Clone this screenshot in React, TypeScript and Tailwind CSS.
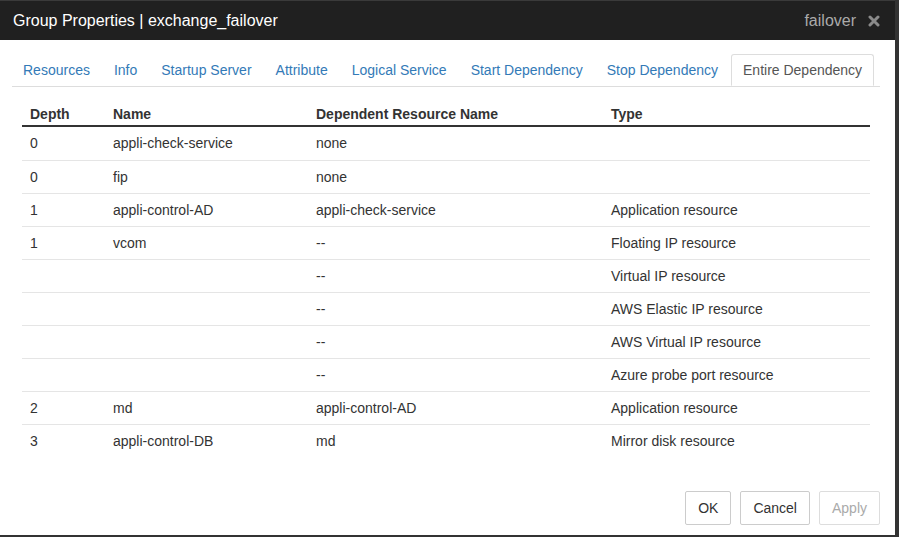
const tabs = [
  'Resources',
  'Info',
  'Startup Server',
  'Attribute',
  'Logical Service',
  'Start Dependency',
  'Stop Dependency',
  'Entire Dependency',
];

const rows = [
  ['0', 'appli-check-service', 'none', ''],
  ['0', 'fip', 'none', ''],
  ['1', 'appli-control-AD', 'appli-check-service', 'Application resource'],
  ['1', 'vcom', '--', 'Floating IP resource'],
  ['', '', '--', 'Virtual IP resource'],
  ['', '', '--', 'AWS Elastic IP resource'],
  ['', '', '--', 'AWS Virtual IP resource'],
  ['', '', '--', 'Azure probe port resource'],
  ['2', 'md', 'appli-control-AD', 'Application resource'],
  ['3', 'appli-control-DB', 'md', 'Mirror disk resource'],
];

const colW = ['w-[83px]', 'w-[203px]', 'w-[295px]', 'flex-1'];

const App = () => {
  return (
    <div
      className="w-[899px] h-[537px] bg-[#333] overflow-hidden"
      style={{ fontFamily: '"Liberation Sans", Arial, sans-serif' }}
    >
      <div className="w-[895px] h-[535px] bg-white flex flex-col">
        {/* header */}
        <div className="h-[40px] bg-[#202020] border-t border-[#3a3a3a] flex items-center justify-between pl-[13px] pr-[15px]">
          <span className="text-white text-[16px]">Group Properties | exchange_failover</span>
          <div className="flex items-center gap-[12px]">
            <span className="text-[#aaa] text-[16px]">failover</span>
            <svg width="12" height="12" viewBox="0 0 12 12">
              <path d="M2 2 L10 10 M10 2 L2 10" stroke="#8a8a8a" strokeWidth="3" strokeLinecap="round" />
            </svg>
          </div>
        </div>

        {/* tabs */}
        <div className="mt-[14px] mx-[12px] mr-[15px] flex border-b border-[#ddd] text-[14px]">
          {tabs.map((t, i) => {
            const active = i === tabs.length - 1;
            return (
              <div
                key={t}
                className={
                  active
                    ? 'h-[32px] px-[11px] flex items-center border border-[#ddd] border-b-white -mb-px rounded-t-[3px] text-[#555] bg-white'
                    : 'h-[32px] px-[11px] mr-[2px] flex items-center text-[#337ab7]'
                }
              >
                {t}
              </div>
            );
          })}
        </div>

        {/* table */}
        <div className="mt-[13px] ml-[22px] w-[848px] text-[14px] text-[#333]">
          <div className="flex h-[27px] items-center border-b-2 border-[#333] font-bold pt-[3px]">
            {['Depth', 'Name', 'Dependent Resource Name', 'Type'].map((h, i) => (
              <div key={h} className={`${colW[i]} pl-[8px]`}>
                {h}
              </div>
            ))}
          </div>
          {rows.map((r, ri) => (
            <div
              key={ri}
              className={`flex h-[33px] items-center ${ri > 0 ? 'border-t border-[#e5e5e5]' : ''}`}
            >
              {r.map((c, i) => (
                <div key={i} className={`${colW[i]} pl-[8px]`}>
                  {c}
                </div>
              ))}
            </div>
          ))}
        </div>

        {/* footer */}
        <div className="mt-auto pb-[10px] pr-[15px] flex justify-end gap-[9px] text-[14px]">
          <button className="h-[34px] px-[12px] border border-[#ccc] rounded-[2px] text-[#333] bg-white">OK</button>
          <button className="h-[34px] px-[12px] border border-[#ccc] rounded-[2px] text-[#333] bg-white">Cancel</button>
          <button className="h-[34px] px-[12px] border border-[#ddd] rounded-[2px] text-[#aaa] bg-white">Apply</button>
        </div>
      </div>
    </div>
  );
};

export default App;
